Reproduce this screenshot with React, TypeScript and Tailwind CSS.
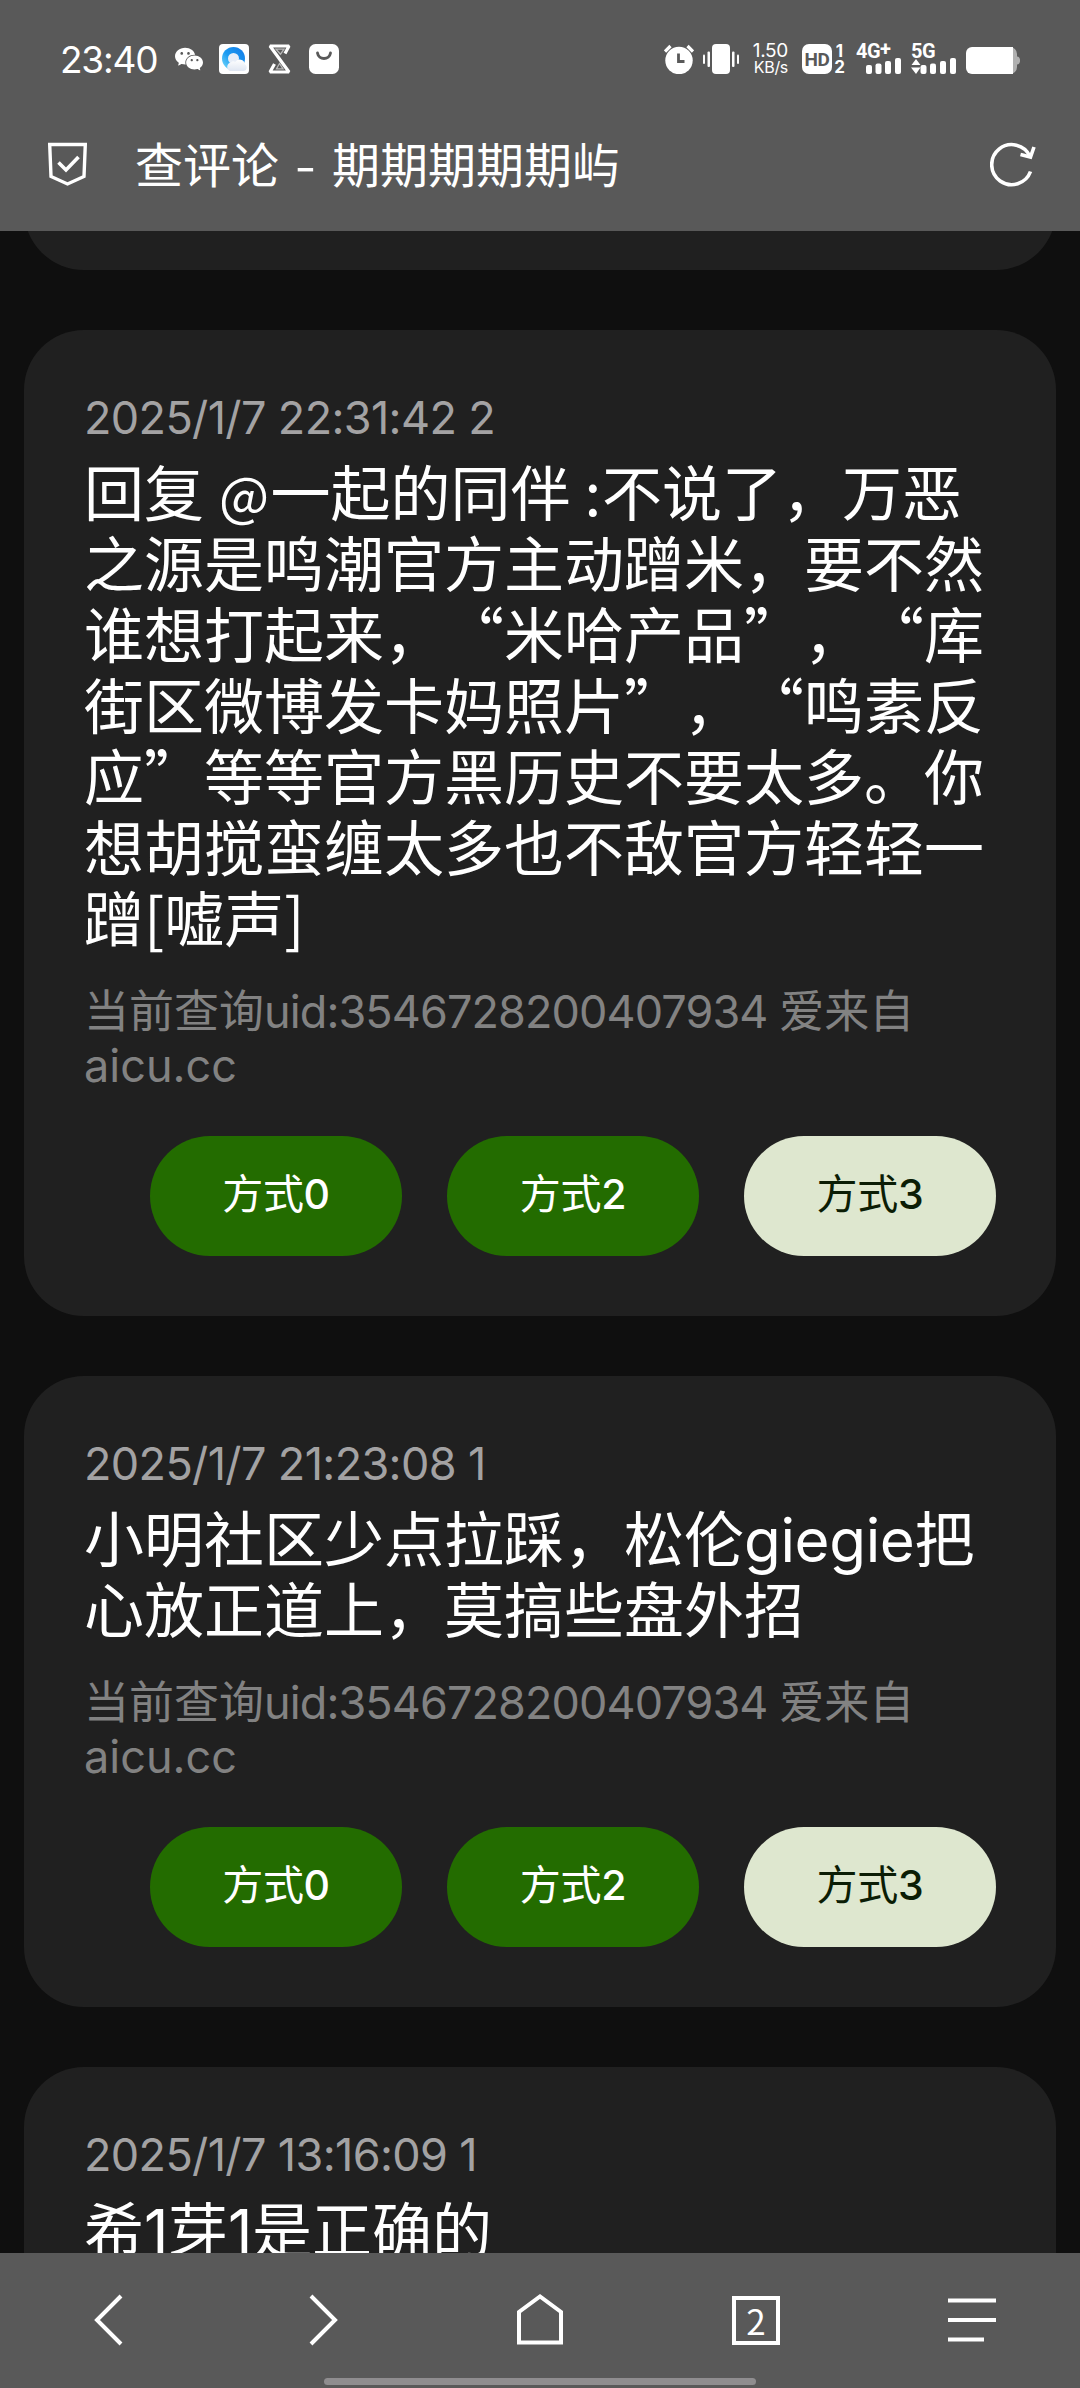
import React from "react";
import { AiFillWechat } from "react-icons/ai";

interface Comment {
  time: string;
  lines: React.ReactNode[];
}

const Latin: React.FC<{ children: React.ReactNode }> = ({ children }) => (
  <span className="font-['Inter','Noto_Sans_CJK_SC',sans-serif] tracking-[-0.006em]">
    {children}
  </span>
);

const comments: Comment[] = [
  {
    time: "2025/1/7 22:31:42 2",
    lines: [
      <>
        回复 <span className="inline-block w-[53px] text-center text-[53px] leading-none">@</span>一起的同伴{" "}
        <span className="inline-block w-[18px] text-center">:</span>不说了，万恶
      </>,
      "之源是鸣潮官方主动蹭米，要不然",
      "谁想打起来，“米哈产品”，“库",
      "街区微博发卡妈照片”，“鸣素反",
      "应”等等官方黑历史不要太多。你",
      "想胡搅蛮缠太多也不敌官方轻轻一",
      "蹭[嘘声]",
    ],
  },
  {
    time: "2025/1/7 21:23:08 1",
    lines: [
      <>
        小明社区少点拉踩，松伦<Latin>giegie</Latin>把
      </>,
      "心放正道上，莫搞些盘外招",
    ],
  },
  {
    time: "2025/1/7 13:16:09 1",
    lines: [
      <>
        希<Latin>1</Latin>芽<Latin>1</Latin>是正确的
      </>,
    ],
  },
];

const StatusBar = () => (
  <div className="flex h-[102px] items-center pl-[60px] pr-[60px] pt-[16px] text-white">
    <span className="w-[99px] whitespace-nowrap text-[37px] leading-none tracking-[-1.200px]">
      23:40
    </span>
    <AiFillWechat className="ml-[14px] size-[32px]" />
    <svg className="ml-[14px]" width="30" height="30" viewBox="0 0 30 30">
      <rect width="30" height="30" rx="4" fill="#fff" />
      <defs>
        <linearGradient id="ring" x1="0" y1="1" x2="1" y2="0">
          <stop offset="0" stopColor="#7fe0fb" />
          <stop offset="0.45" stopColor="#1c9cf2" />
          <stop offset="1" stopColor="#1479e6" />
        </linearGradient>
        <linearGradient id="cloud" x1="0" y1="0" x2="0" y2="1">
          <stop offset="0" stopColor="#fff" />
          <stop offset="1" stopColor="#dfe6f2" />
        </linearGradient>
      </defs>
      <circle cx="14.5" cy="14.5" r="11.5" fill="url(#ring)" />
      <circle cx="14.5" cy="14.5" r="5.5" fill="#e8eef8" />
      <path
        d="M11 27a4.5 4.5 0 0 1 1-8.600c1-1.400 3-1.400 4.200-.4a5.200 5.200 0 0 1 9.600 2.300A3.600 3.600 0 0 1 25 27z"
        fill="url(#cloud)"
      />
    </svg>
    <svg className="ml-[19px]" width="23" height="30" viewBox="0 0 23 30" fill="none" stroke="#fff">
      <path d="M17 9.500 21 2H2L21 28H2L6.500 20" strokeWidth="3.200" strokeLinejoin="bevel" />
      <path d="M8 5.200h8l-3.500 5zM11.500 19.500 8.500 24.800h6.500z" stroke="#b8b8b8" strokeWidth="1.300" />
    </svg>
    <svg className="ml-[18px]" width="30" height="30" viewBox="0 0 30 30">
      <rect width="30" height="30" rx="6.500" fill="#fff" />
      <path d="M8.500 9c1 7.300 12 7.300 13 0" fill="none" stroke="#595959" strokeWidth="2.800" strokeLinecap="round" />
    </svg>

    <div className="ml-auto flex items-center">
      <svg width="30" height="30" viewBox="0 0 30 30">
        <circle cx="15" cy="16.500" r="13.700" fill="#fff" />
        <path d="M1 7.500 6.500 2M29 7.500 23.500 2" stroke="#fff" strokeWidth="3.200" />
        <path d="M14.500 9.500v8h6" fill="none" stroke="#595959" strokeWidth="2.800" />
      </svg>
      <svg className="ml-[9px]" width="36" height="30" viewBox="0 0 36 30" fill="#fff">
        <rect x="9" y="0" width="18" height="30" rx="4" />
        <rect x="0" y="10.500" width="2" height="9.500" rx="1" />
        <rect x="4.500" y="7.500" width="2.500" height="15.500" rx="1" />
        <rect x="29" y="7.500" width="2.500" height="15.500" rx="1" />
        <rect x="34" y="10.500" width="2" height="9.500" rx="1" />
      </svg>
      <div className="ml-[13px] flex w-[36px] flex-col items-end whitespace-nowrap leading-none">
        <span className="text-[19px] leading-[16px] tracking-[-0.3px]">1.50</span>
        <span className="text-[16px] leading-[16px] tracking-[-0.3px]">KB/s</span>
      </div>
      <div className="ml-[14px] flex items-center">
        <span className="flex size-[30px] items-center justify-center rounded-[7px] bg-white font-['Roboto',sans-serif] text-[19px] font-bold leading-none tracking-[-0.5px] text-[#595959]">
          HD
        </span>
        <span className="ml-[2px] flex w-[11px] flex-col items-center text-[17px] font-bold leading-[16px]">
          <span>1</span>
          <span>2</span>
        </span>
      </div>
      <div className="ml-[11px] flex h-[30px] w-[46px] flex-col justify-between">
        <span className="flex h-[14px] font-['Roboto',sans-serif] text-[20px] font-bold leading-[14px] tracking-[-0.5px]">
          4G<span className="leading-[11px]">+</span>
        </span>
        <svg className="-mt-[1px] ml-[10px] shrink-0" width="36" height="17" viewBox="0 0 36 17" fill="#fff">
          <rect x="0" y="8" width="6" height="9" rx="2" />
          <rect x="9.500" y="6.500" width="6" height="10.500" rx="2" />
          <rect x="19" y="4" width="6" height="13" rx="2" />
          <rect x="29" y="1" width="6" height="16" rx="2" />
        </svg>
      </div>
      <div className="ml-[9px] flex h-[30px] w-[46px] flex-col justify-between">
        <span className="h-[14px] whitespace-nowrap font-['Roboto',sans-serif] text-[20px] font-bold leading-[14px] tracking-[-0.5px]">
          5G
        </span>
        <svg className="-mt-[1px] shrink-0" width="46" height="17" viewBox="0 0 46 17" fill="#fff">
          <path d="M5 2 9.500 8H.5zM0 10.500h9.500L5 17z" />
          <rect x="9.500" y="8" width="6" height="9" rx="2" />
          <rect x="19" y="6.500" width="6" height="10.500" rx="2" />
          <rect x="29" y="4" width="6" height="13" rx="2" />
          <rect x="39" y="1" width="6" height="16" rx="2" />
        </svg>
      </div>
      <svg className="ml-[9px] mt-[3px]" width="54" height="27" viewBox="0 0 54 27">
        <path d="M6 0h38a7 7 0 0 1 7 7v2.500a3 4 0 0 1 3 3v2a3 4 0 0 1-3 3V20a7 7 0 0 1-7 7H6z" fill="#b0b0b0" />
        <path d="M6 0h41v27H6a6 6 0 0 1-6-6V6a6 6 0 0 1 6-6z" fill="#fff" />
      </svg>
    </div>
  </div>
);

const AddressBar = () => (
  <div className="flex h-[129px] items-center pb-[5px] pl-[48px] pr-[44px]">
    <svg width="39" height="44" viewBox="0 0 39 44" fill="none" stroke="#fff">
      <path d="M1.700 2.500h35.600L36 34.500 19.500 42 3 34.500z" strokeWidth="3.400" />
      <path d="m10.500 20.500 7.500 7.500 12.500-13" strokeWidth="3.600" />
    </svg>
    <h1 className="mb-[4px] ml-[48px] whitespace-pre font-['Noto_Sans_CJK_SC',sans-serif] text-[48px] leading-[60px] text-white">
      查评论<span className="inline-flex w-[53px] justify-center">
        <span className="scale-x-125">-</span>
      </span>期期期期期屿
    </h1>
    <svg className="ml-auto" width="46" height="46" viewBox="0 0 46 46" fill="none" stroke="#fff" strokeWidth="3.600">
      <path d="M40.500 30.500A20 20 0 1 1 40 15.500" />
      <path d="m30.500 13.500 10 2.500 3.500-10" />
    </svg>
  </div>
);

const CommentCard: React.FC<{ comment: Comment }> = ({ comment }) => (
  <article className="shrink-0 rounded-[60px] bg-[#202020] p-[60px]">
    <p className="h-[54px] whitespace-nowrap text-[45px] leading-[55px] tracking-[-0.014em] text-[#a3a2a3]">
      {comment.time}
    </p>
    <div className="mt-[10px] whitespace-pre font-['Noto_Sans_CJK_SC',sans-serif] text-[60px] leading-[71px] text-white [text-spacing-trim:space-all]">
      {comment.lines.map((line, i) => (
        <p key={i} className="h-[71px]">
          {line}
        </p>
      ))}
    </div>
    <p className="mt-[34px] h-[106px] text-[45px] leading-[54px] tracking-[-0.02em] text-[#828282]">
      <span className="tracking-normal">当前查询</span>uid:3546728200407934{" "}
      <span className="tracking-normal">爱来自</span>
      <br />
      <span className="tracking-normal">aicu.cc</span>
    </p>
    <div className="mt-[45px] flex justify-end gap-[45px] text-[41px] font-medium leading-none tracking-[-0.3px]">
      <button className="h-[120px] w-[252px] rounded-full bg-[#236c00] pb-[3px] text-white">
        <span className="font-normal">方式</span>0
      </button>
      <button className="h-[120px] w-[252px] rounded-full bg-[#236c00] pb-[3px] text-white">
        <span className="font-normal">方式</span>2
      </button>
      <button className="h-[120px] w-[252px] rounded-full bg-[#dee7cf] pb-[3px] text-[#0b1d05]">
        <span className="font-normal">方式</span>3
      </button>
    </div>
  </article>
);

const NavBar = () => (
  <footer className="flex h-[135px] flex-col items-center bg-[#595959]">
    <nav className="grid h-[125px] w-full grid-cols-5 place-items-center pt-[9px]">
      <svg width="50" height="52" viewBox="0 0 50 52" fill="none" stroke="#fff" strokeWidth="4">
        <path d="M38 2 14 26l24 24" />
      </svg>
      <svg width="50" height="52" viewBox="0 0 50 52" fill="none" stroke="#fff" strokeWidth="4">
        <path d="m12 2 24 24-24 24" />
      </svg>
      <svg width="50" height="52" viewBox="0 0 50 52" fill="none" stroke="#fff" strokeWidth="4">
        <path d="M4 48.500V18L25 2.500 46 18v30.500z" />
      </svg>
      <div className="flex h-[49px] w-[48px] items-center justify-center border-4 border-white pb-[1px] font-['Noto_Sans_CJK_SC',sans-serif] text-[35px] leading-none text-white">
        2
      </div>
      <svg width="48" height="52" viewBox="0 0 48 52" stroke="#fff" strokeWidth="4">
        <path d="M0 6.500h48M0 26h48M0 45.500h36" />
      </svg>
    </nav>
    <div className="h-[7px] w-[432px] rounded-full bg-[#8f8d8f]" />
  </footer>
);

const App: React.FC = () => {
  return (
    <div
      lang="zh-CN"
      className="flex h-[2388px] w-[1080px] flex-col overflow-hidden bg-[#0f0f0f] font-['Inter','Noto_Sans_CJK_SC',sans-serif]"
    >
      <header className="shrink-0 bg-[#595959]">
        <StatusBar />
        <AddressBar />
      </header>
      <main className="flex h-[2022px] flex-col gap-[60px] overflow-hidden px-6">
        <div className="-mt-[81px] h-[120px] shrink-0 rounded-[60px] bg-[#202020]" />
        {comments.map((comment) => (
          <CommentCard key={comment.time} comment={comment} />
        ))}
      </main>
      <NavBar />
    </div>
  );
};

export default App;
